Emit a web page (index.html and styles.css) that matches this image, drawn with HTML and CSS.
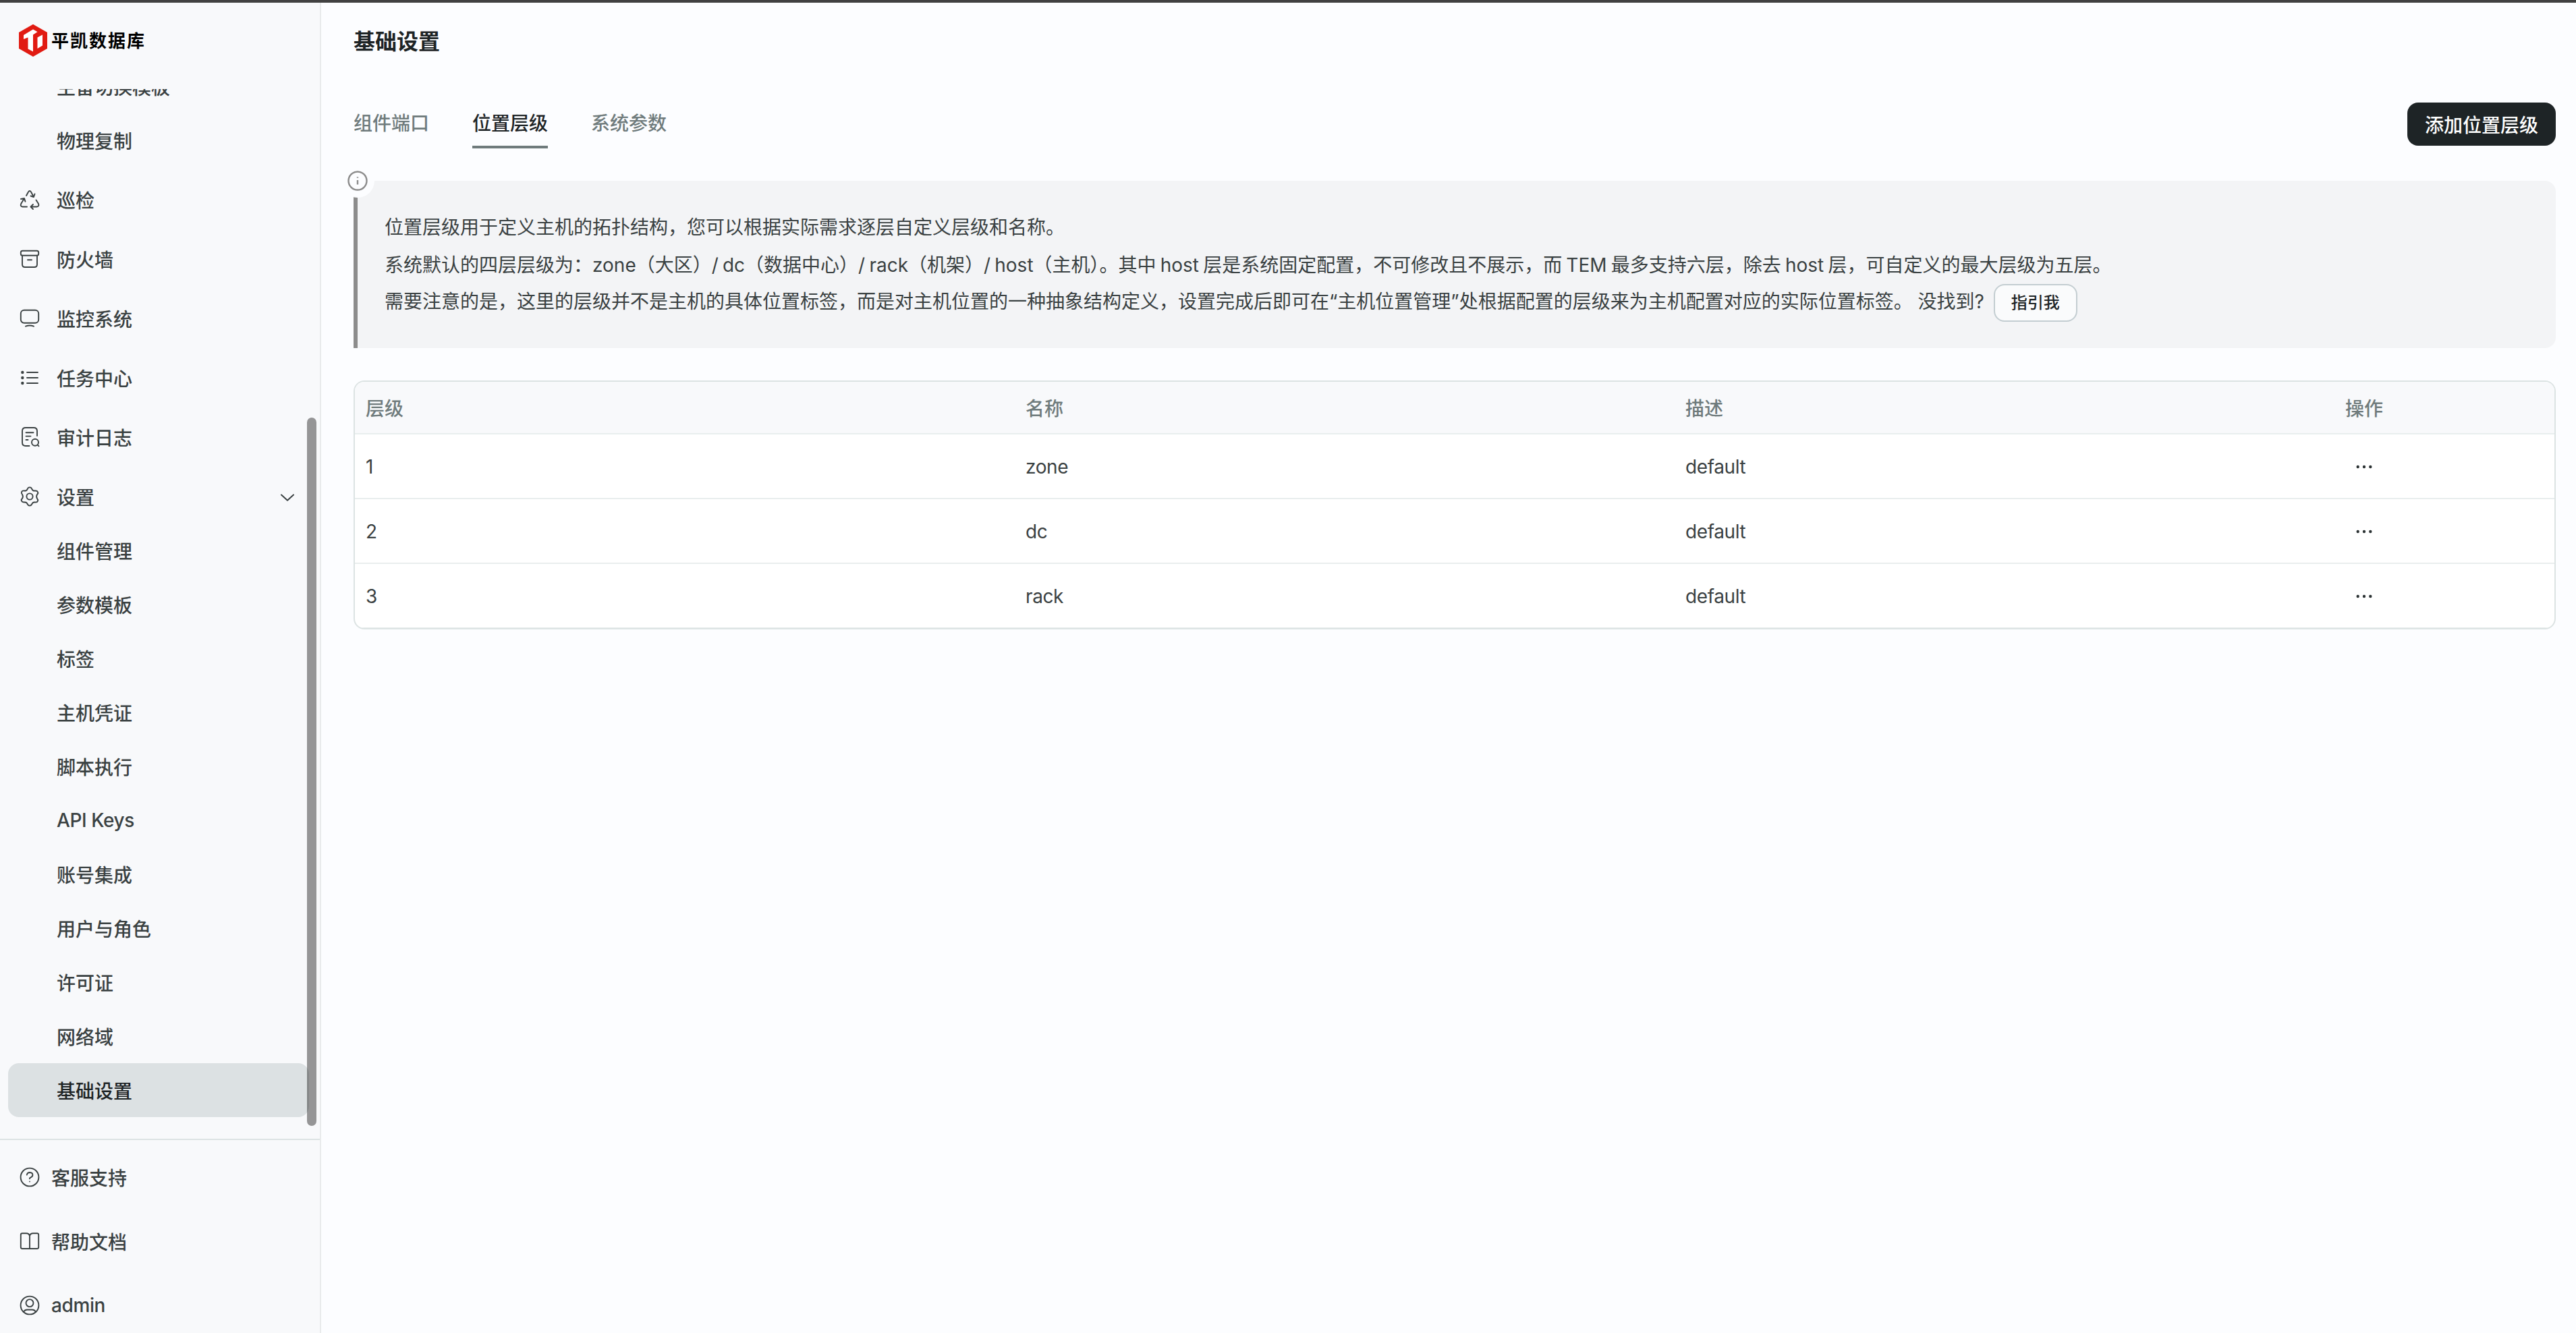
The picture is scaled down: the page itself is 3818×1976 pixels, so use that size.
FILE: index.html
```html
<!DOCTYPE html>
<html lang="zh-CN">
<head>
    <meta charset="UTF-8">
    <meta name="viewport" content="width=device-width, initial-scale=1.0">
    <title>基础设置</title>
    <link rel="stylesheet" href="styles.css">
</head>
<body>

    <!-- 侧边栏 -->
    <aside class="sidebar">
        <div class="logo">
            <svg class="logo-icon" viewBox="0 0 42 48">
                <path fill="#e11b12" d="M21 0 42 12V36L21 48 0 36V12z"/>
                <path fill="#fff" d="M7 16 21 7.500 27.500 11.300 21 15.500V40.500L13.500 36.500V19.500L7 22z"/>
                <path fill="#fff" d="M27.500 19.500 35 15.500V31.500L27.500 36z"/>
            </svg>
            <span class="logo-text">平凯数据库</span>
        </div>

        <nav class="nav">
            <div class="sub-menu first">
                <a class="sub-item">主备切换模板</a>
                <a class="sub-item">物理复制</a>
            </div>
            <a class="nav-item">
                <svg class="icon" viewBox="0 0 32 32">
                    <path d="M11 10 14 4.500q2-3 4 0L22 12M22 12 17.500 10.500M22 12l1.500-4.500"/>
                    <path d="M25.500 16.500 29 22q1.500 4-2.500 4.500H17.500M17.500 26.500 21 23M17.500 26.500 21 30"/>
                    <path d="M12 26.500H5.500Q1.500 26 3.200 22L8 14M8 14 3 15M8 14l1.500 4.800"/>
                </svg>
                <span>巡检</span>
            </a>
            <a class="nav-item">
                <svg class="icon" viewBox="0 0 32 32">
                    <rect x="2.800" y="3.800" width="26.400" height="7" rx="2.600"/>
                    <path d="M5 10.800V24q0 4 4 4H23q4 0 4-4V10.800M13 17.300h6"/>
                </svg>
                <span>防火墙</span>
            </a>
            <a class="nav-item">
                <svg class="icon" viewBox="0 0 32 32">
                    <rect x="2.800" y="3.800" width="26.400" height="18.900" rx="5"/>
                    <path d="M10 27.700q6-2.400 12 0"/>
                </svg>
                <span>监控系统</span>
            </a>
            <a class="nav-item">
                <svg class="icon" viewBox="0 0 32 32">
                    <path d="M12 8H28M12 16H28M12 24H28"/>
                    <g class="fill"><circle cx="5.300" cy="8" r="2.200"/><circle cx="5.300" cy="16" r="2.200"/><circle cx="5.300" cy="24" r="2.200"/></g>
                </svg>
                <span>任务中心</span>
            </a>
            <a class="nav-item">
                <svg class="icon" viewBox="0 0 32 32">
                    <path d="M15.500 29H10q-5 0-5-5V7q0-5 5-5H22q5 0 5 5V14M10.500 9.300H21.500M10.500 14.600H17.500M10.500 20H13.500"/>
                    <circle cx="24" cy="23.800" r="5"/>
                    <path d="M27.800 27.600 29.500 29.300"/>
                </svg>
                <span>审计日志</span>
            </a>
            <a class="nav-item">
                <svg class="icon" viewBox="0 0 32 32">
                    <path d="M12.700 4.800Q13.600 2.400 16 2.400T19.300 4.800Q20.600 8 24 7.500 27 7.200 28 9.400T27 13Q25.200 16 27 19 28.800 20.800 27.900 22.900T24 24.500Q20.600 24 19.300 27.200 18.400 29.600 16 29.600T12.700 27.200Q11.400 24 8 24.500 5 24.800 4 22.600T5 19Q6.800 16 5 13 3.200 11.200 4.100 9.100T8 7.500Q11.400 8 12.700 4.800Z"/>
                    <circle cx="16" cy="16" r="4.600"/>
                </svg>
                <span>设置</span>
                <svg class="arrow" viewBox="0 0 20 12"><path d="M1 1.500 10 9.800 19 1.500"/></svg>
            </a>
            <div class="sub-menu">
                <a class="sub-item">组件管理</a>
                <a class="sub-item">参数模板</a>
                <a class="sub-item">标签</a>
                <a class="sub-item">主机凭证</a>
                <a class="sub-item">脚本执行</a>
                <a class="sub-item latin">API Keys</a>
                <a class="sub-item">账号集成</a>
                <a class="sub-item">用户与角色</a>
                <a class="sub-item">许可证</a>
                <a class="sub-item">网络域</a>
                <a class="sub-item active">基础设置</a>
            </div>
            <div class="scrollbar"></div>
        </nav>

        <div class="sidebar-footer">
            <a class="footer-item">
                <svg class="icon" viewBox="0 0 32 32">
                    <circle cx="16" cy="16" r="13.400"/>
                    <path d="M11.800 12.600q.7-3.600 4.400-3.600 4.200.2 4.200 3.800 0 2.400-3 3.700-1.500.6-1.500 1.800"/>
                    <circle class="fill" cx="16" cy="22.500" r=".9"/>
                </svg>
                <span>客服支持</span>
            </a>
            <a class="footer-item">
                <svg class="icon" viewBox="0 0 32 32">
                    <path d="M16 27V8q-1-3.700-5-3.700H5Q2.800 4.300 2.800 6.500V24.800Q2.800 27 5 27H27q2.200 0 2.200-2.200V6.500q0-2.200-2.200-2.200H21q-4 0-5 3.700"/>
                </svg>
                <span>帮助文档</span>
            </a>
            <a class="footer-item">
                <svg class="icon" viewBox="0 0 32 32">
                    <circle cx="16" cy="16" r="13.400"/>
                    <circle cx="16" cy="12.600" r="5.500"/>
                    <path d="M7 25.500q2-3 5-3h8q3 0 5 3"/>
                </svg>
                <span class="latin">admin</span>
            </a>
        </div>
    </aside>

    <!-- 内容区 -->
    <main class="main">
        <h1 class="title">基础设置</h1>

        <div class="toolbar">
            <div class="tabs">
                <a class="tab">组件端口</a>
                <a class="tab active">位置层级</a>
                <a class="tab">系统参数</a>
            </div>
            <button class="btn-primary">添加位置层级</button>
        </div>

        <div class="notice">
            <span class="notice-icon">
                <svg viewBox="0 0 30 30">
                    <circle cx="15" cy="15" r="13.500"/>
                    <path d="M15 14v6.500M15 9.200v1.600"/>
                </svg>
            </span>
            <p>位置层级用于定义主机的拓扑结构，您可以根据实际需求逐层自定义层级和名称。</p>
            <p class="narrow">系统默认的四层层级为：zone（大区）/ dc（数据中心）/ rack（机架）/ host（主机）。其中 host 层是系统固定配置，不可修改且不展示，而 TEM 最多支持六层，除去 host 层，可自定义的最大层级为五层。</p>
            <p class="last">需要注意的是，这里的层级并不是主机的具体位置标签，而是对主机位置的一种抽象结构定义，设置完成后即可在“主机位置管理”处根据配置的层级来为主机配置对应的实际位置标签。 没找到? <button class="btn-guide">指引我</button></p>
        </div>

        <div class="table-box">
            <table>
                <thead>
                    <tr><th>层级</th><th>名称</th><th>描述</th><th class="action">操作</th></tr>
                </thead>
                <tbody>
                    <tr><td>1</td><td>zone</td><td>default</td><td><svg class="more" viewBox="0 0 24 6"><circle cx="2.700" cy="3" r="2.200"/><circle cx="12" cy="3" r="2.200"/><circle cx="21.300" cy="3" r="2.200"/></svg></td></tr>
                    <tr><td>2</td><td>dc</td><td>default</td><td><svg class="more" viewBox="0 0 24 6"><circle cx="2.700" cy="3" r="2.200"/><circle cx="12" cy="3" r="2.200"/><circle cx="21.300" cy="3" r="2.200"/></svg></td></tr>
                    <tr><td>3</td><td>rack</td><td>default</td><td><svg class="more" viewBox="0 0 24 6"><circle cx="2.700" cy="3" r="2.200"/><circle cx="12" cy="3" r="2.200"/><circle cx="21.300" cy="3" r="2.200"/></svg></td></tr>
                </tbody>
            </table>
        </div>
    </main>

</body>
</html>
```
FILE: styles.css
```css
* {
    box-sizing: border-box;
}

body {
    margin: 0;
    height: 1976px;
    display: flex;
    border-top: 4px solid #414141;
    background-color: #fcfdff;
    color: #3a4142;
    font-family: Inter, "Noto Sans CJK SC", sans-serif;
    font-size: 28px;
    overflow: hidden;
}

/* 侧边栏 */
.sidebar {
    width: 476px;
    flex-shrink: 0;
    display: flex;
    flex-direction: column;
    border-right: 2px solid #e9ebec;
    background-color: #f8f9fb;
    font-weight: 500;
}
.logo {
    height: 128px;
    flex-shrink: 0;
    padding: 32px 0 0 28px;
    display: flex;
    align-items: flex-start;
    gap: 6px;
}
.logo-icon {
    width: 42px;
    height: 48px;
}
.logo-text {
    font-size: 26px;
    font-weight: 700;
    line-height: 49px;
    letter-spacing: 2px;
    color: #000;
}
.nav {
    position: relative;
    flex: 1;
    overflow: hidden;
}
.nav-item, .sub-item {
    height: 80px;
    display: flex;
    align-items: center;
}
.nav-item {
    margin-bottom: 8px;
    padding: 0 46px 0 28px;
}
.nav-item span {
    flex: 1;
    padding-left: 24px;
}
.nav-item:has(+ .sub-menu) {
    margin-bottom: 0;
}
.sub-menu.first {
    margin: -44px 0 8px;
}
.sub-item {
    margin: 0 16px 0 12px;
    padding-left: 72px;
    border-radius: 16px;
}
.sub-item.active {
    background-color: #dce1e3;
    color: #1e2426;
}
.latin {
    letter-spacing: -0.4px;
}
.scrollbar {
    position: absolute;
    right: 5px;
    bottom: 19px;
    width: 14px;
    height: 1050px;
    border-radius: 7px;
    background-color: rgba(0, 0, 0, 0.4);
}
.icon {
    width: 32px;
    height: 32px;
    flex-shrink: 0;
}
.icon, .arrow {
    fill: none;
    stroke: #3a4142;
    stroke-width: 1.9;
    stroke-linecap: round;
    stroke-linejoin: round;
}
.icon .fill {
    fill: #3a4142;
    stroke: none;
}
.arrow {
    width: 20px;
    height: 12px;
    margin: 4px -8px 0 0;
    stroke-width: 2;
}
.sidebar-footer {
    height: 288px;
    padding-top: 7px;
    border-top: 2px solid #dce3e3;
}
.footer-item {
    height: 95px;
    padding-left: 28px;
    display: flex;
    align-items: center;
    gap: 16px;
}

/* 内容区 */
.main {
    flex: 1;
    padding: 34px 30px 0 48px;
}
.title {
    height: 48px;
    margin: 0;
    font-size: 32px;
    font-weight: 600;
    line-height: 48px;
    color: #1e2426;
}
.toolbar {
    height: 68px;
    margin: 62px 0 52px;
    display: flex;
    justify-content: space-between;
}
.tabs {
    display: flex;
    gap: 64px;
}
.tab {
    height: 72px;
    padding-top: 13px;
    line-height: 44px;
    color: #6f7b7c;
    font-weight: 500;
}
.tab.active {
    border-bottom: 4px solid #6f7b7c;
    color: #1e2426;
}
.btn-primary {
    width: 220px;
    height: 64px;
    margin-top: 4px;
    padding: 0;
    border: none;
    border-radius: 16px;
    background-color: #1e2426;
    color: #fff;
    font: inherit;
    font-weight: 500;
}
.notice {
    position: relative;
    height: 248px;
    margin-bottom: 48px;
    padding: 41px 0 0 40px;
    border-left: 6px solid #8c8c8c;
    border-radius: 0 16px 16px 0;
    background-color: #f3f4f6;
}
.notice-icon {
    position: absolute;
    left: -25px;
    top: -25px;
    width: 50px;
    height: 50px;
    padding: 10px;
    border-radius: 50%;
    background-color: #fcfdff;
}
.notice-icon svg {
    display: block;
    width: 30px;
    height: 30px;
    fill: none;
    stroke: #8c8c8c;
    stroke-width: 2.4;
}
.notice p {
    margin: 0;
    height: 56px;
    line-height: 56px;
    white-space: nowrap;
}
.notice p.narrow {
    word-spacing: -1.7px;
}
.notice p.last {
    line-height: 52px;
}
.btn-guide {
    width: 124px;
    height: 56px;
    margin-left: 6px;
    padding: 0;
    border: 2px solid #c3cdd1;
    border-radius: 16px;
    background-color: #fafbfc;
    color: #1e2426;
    font: inherit;
    font-size: 24px;
    font-weight: 500;
    line-height: 52px;
    vertical-align: middle;
}

/* 表格 */
.table-box {
    height: 369px;
    border: 2px solid #dce3e3;
    border-radius: 16px;
    background-color: #fff;
    overflow: hidden;
}
table {
    width: 100%;
    table-layout: fixed;
    border-spacing: 0;
}
th, td {
    padding: 0 16px;
    text-align: left;
    border-bottom: 2px solid #e9eeee;
}
th {
    width: 30%;
    height: 78px;
    background-color: #f8f9fb;
    color: #6f7b7c;
    font-weight: 500;
}
th.action {
    width: 10%;
}
td {
    height: 96px;
    padding-top: 1px;
    letter-spacing: -0.4px;
}
.more {
    display: block;
    width: 24px;
    height: 6px;
    margin-left: 16px;
    fill: #2c3334;
}
```
